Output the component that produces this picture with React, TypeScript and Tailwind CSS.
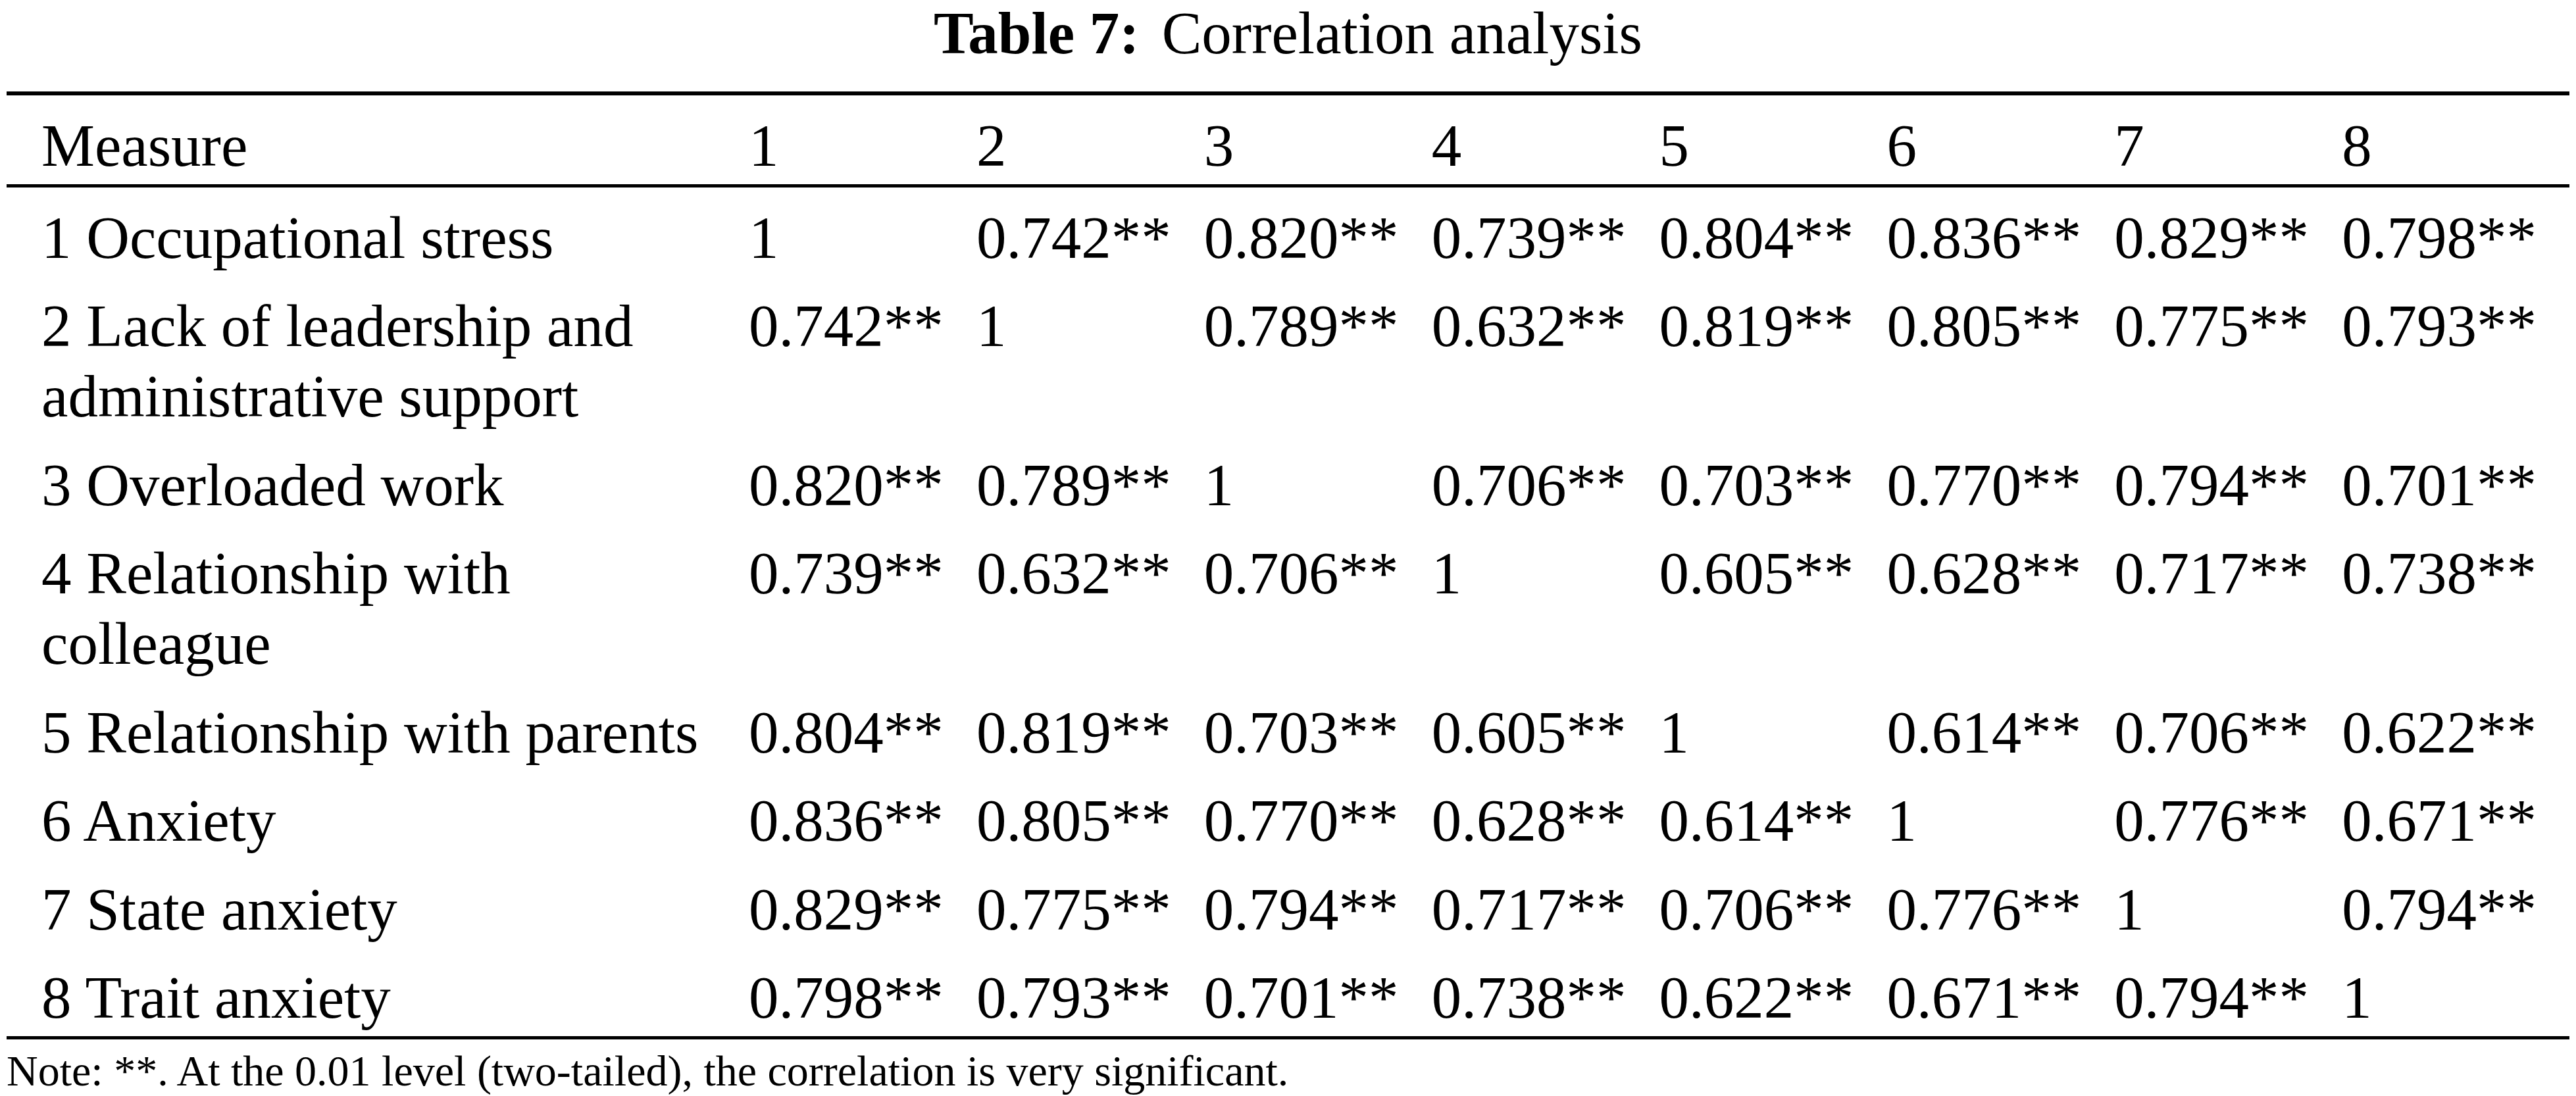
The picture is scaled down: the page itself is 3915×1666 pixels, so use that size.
const headers = ["1", "2", "3", "4", "5", "6", "7", "8"];

const rows: string[][] = [
    ["1 Occupational stress", "1", "0.742**", "0.820**", "0.739**", "0.804**", "0.836**", "0.829**", "0.798**"],
    ["2 Lack of leadership and administrative support", "0.742**", "1", "0.789**", "0.632**", "0.819**", "0.805**", "0.775**", "0.793**"],
    ["3 Overloaded work", "0.820**", "0.789**", "1", "0.706**", "0.703**", "0.770**", "0.794**", "0.701**"],
    ["4 Relationship with colleague", "0.739**", "0.632**", "0.706**", "1", "0.605**", "0.628**", "0.717**", "0.738**"],
    ["5 Relationship with parents", "0.804**", "0.819**", "0.703**", "0.605**", "1", "0.614**", "0.706**", "0.622**"],
    ["6 Anxiety", "0.836**", "0.805**", "0.770**", "0.628**", "0.614**", "1", "0.776**", "0.671**"],
    ["7 State anxiety", "0.829**", "0.775**", "0.794**", "0.717**", "0.706**", "0.776**", "1", "0.794**"],
    ["8 Trait anxiety", "0.798**", "0.793**", "0.701**", "0.738**", "0.622**", "0.671**", "0.794**", "1"],
];

function Row({ cells }: { cells: string[] }) {
    return (
        <div className="grid grid-cols-[1128px_repeat(8,1fr)] pt-[23px] pb-[4.5px] text-[91px] leading-[107px]">
            {/* Measure label */}
            <div className="pl-[53px] pr-[30px]">{cells[0]}</div>
            {cells.slice(1).map((c, i) => (
                <div key={i} className="whitespace-nowrap">{c}</div>
            ))}
        </div>
    );
}

export default function App() {
    return (
        <div className="w-[3915px] h-[1666px] bg-white text-black overflow-hidden font-['Liberation_Serif','Times_New_Roman',serif]">
            {/* Caption */}
            <div className="text-center text-[91px] leading-[101px] whitespace-nowrap">
                <span className="font-bold">Table 7:</span>
                <span className="ml-[34px]">Correlation analysis</span>
            </div>

            <div className="ml-[10px] w-[3895px]">
                <div className="mt-[38px] h-[6px] bg-black" />
                <Row cells={["Measure", ...headers]} />
                <div className="h-[5px] bg-black" />
                {rows.map((r, i) => (
                    <Row key={i} cells={r} />
                ))}
                <div className="h-[5px] bg-black" />

                {/* Footnote */}
                <div className="mt-[10px] text-[66px] leading-[75px] whitespace-nowrap">
                    Note: **. At the 0.01 level (two-tailed), the correlation is very significant.
                </div>
            </div>
        </div>
    );
}
